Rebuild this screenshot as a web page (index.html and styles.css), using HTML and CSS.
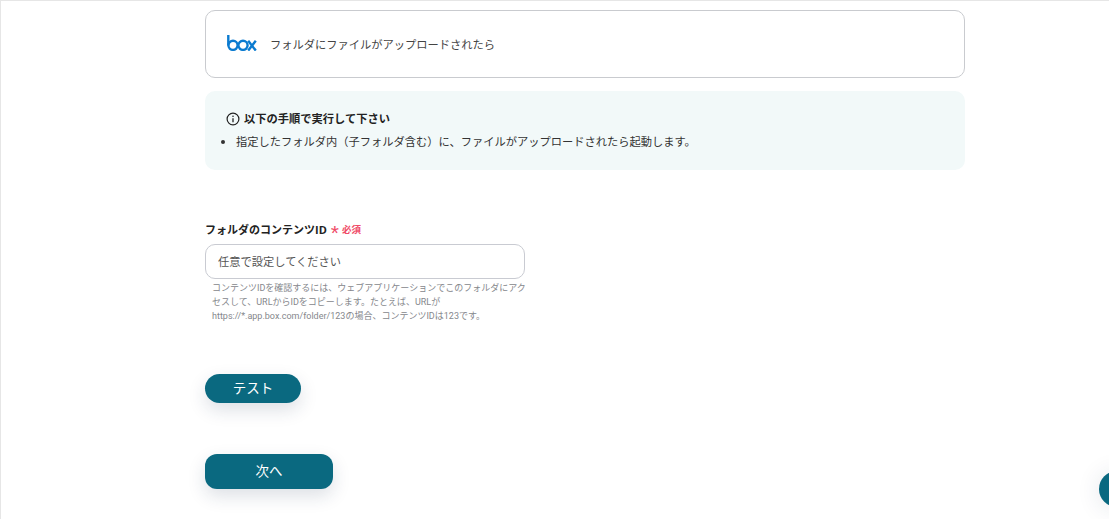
FILE: index.html
```html
<!DOCTYPE html>
<html lang="ja">
<head>
<meta charset="utf-8">
<title>フォルダにファイルがアップロードされたら</title>
<link rel="stylesheet" href="styles.css">
</head>
<body>
<main class="page">
  <section class="trigger-card">
    <svg class="box-logo" width="30" height="16" viewBox="0 0 30 16" aria-label="box">
      <g fill="none" stroke="#0b7bd0" stroke-width="2.4">
        <path d="M1.3 0v10.5"/>
        <circle cx="6" cy="10.3" r="4.6"/>
        <circle cx="16" cy="10.3" r="4.6"/>
        <path d="M21.2 5.8l7.6 9.8M28.8 5.8l-7.6 9.8"/>
      </g>
    </svg>
    <span class="trigger-title">フォルダにファイルがアップロードされたら</span>
  </section>

  <section class="notice">
    <div class="notice-head">
      <svg width="14" height="14" viewBox="0 0 14 14" aria-hidden="true">
        <circle cx="7" cy="7" r="5.9" fill="none" stroke="#222" stroke-width="1.2"/>
        <path d="M7 6.2v4" stroke="#222" stroke-width="1.3" fill="none"/>
        <circle cx="7" cy="4.2" r=".8" fill="#222"/>
      </svg>
      <strong>以下の手順で実行して下さい</strong>
    </div>
    <ul class="notice-list">
      <li>指定したフォルダ内（子フォルダ含む）に、ファイルがアップロードされたら起動します。</li>
    </ul>
  </section>

  <section class="field">
    <div class="field-label">
      <span class="label-text">フォルダのコンテンツID</span>
      <span class="star">*</span>
      <span class="required">必須</span>
    </div>
    <input class="text-input" type="text" placeholder="任意で設定してください">
    <p class="help">コンテンツIDを確認するには、ウェブアプリケーションでこのフォルダにアクセスして、URLからIDをコピーします。たとえば、URLがhttps://*.app.box.com/folder/123の場合、コンテンツIDは123です。</p>
  </section>

  <button class="btn btn-test" type="button">テスト</button>
  <button class="btn btn-next" type="button">次へ</button>
</main>
<div class="fab"></div>
</body>
</html>
```

FILE: styles.css
```css
* { box-sizing: border-box; }
html, body { height: 100%; }
body {
  margin: 0;
  overflow: hidden;
  background: #fff;
  color: #222;
  font-family: "Open Sans", "Noto Sans CJK JP", sans-serif;
  border-top: 1px solid #e6e6e6;
  border-left: 1px solid #e6e6e6;
}
.page {
  width: 760px;
  margin-left: 204px;
  padding-top: 9px;
  display: flex;
  flex-direction: column;
  align-items: flex-start;
}
.trigger-card {
  width: 100%;
  height: 68px;
  border: 1px solid #c9cbcf;
  border-radius: 10px;
  display: flex;
  align-items: center;
  padding: 0 0 0 21px;
  gap: 13px;
}
.box-logo { flex: none; margin-top: -2px; }
.trigger-title { font-size: 11.25px; color: #444; }
.notice {
  width: 100%;
  height: 79px;
  margin-top: 13px;
  padding: 19px 21px 0;
  background: #f2f9f9;
  border-radius: 10px;
}
.notice-head {
  display: flex;
  align-items: center;
  gap: 4px;
  height: 16px;
  font-size: 11.25px;
}
.notice-head svg { flex: none; margin-top: 2px; }
.notice-list {
  margin: 7px 0 0;
  padding: 0 0 0 10px;
  font-size: 11.25px;
  line-height: 18px;
  color: #333;
}
.field {
  width: 320px;
  margin-top: 50px;
}
.field-label {
  display: flex;
  align-items: center;
  height: 18px;
  font-size: 11px;
}
.label-text { font-weight: 700; color: #222; }
.star {
  color: #ef4b67;
  font-family: "Liberation Sans", sans-serif;
  font-size: 21px;
  line-height: 1;
  margin: 7px 0 0 4px;
}
.required { color: #ef4b67; font-size: 9.5px; font-weight: 700; margin-left: 3px; }
.text-input {
  display: block;
  width: 320px;
  height: 35px;
  margin-top: 6px;
  padding: 0 12px;
  border: 1px solid #c9cbd2;
  border-radius: 10px;
  background: #fff;
  font: 11.25px "Open Sans", "Noto Sans CJK JP", sans-serif;
  outline: none;
}
.text-input::placeholder { color: #555; opacity: 1; }
.help {
  margin: 2px -3px 0 7px;
  font-family: "Roboto", "Noto Sans CJK JP", sans-serif;
  font-size: 9px;
  line-height: 14px;
  color: #85878c;
}
.btn {
  display: block;
  border: 0;
  padding: 0 0 4px;
  background: #0a6980;
  color: #fff;
  font-family: "Open Sans", "Noto Sans CJK JP", sans-serif;
  font-size: 13.5px;
  box-shadow: 0 7px 18px rgba(30, 50, 80, .15);
}
.btn-test {
  width: 96px;
  height: 29px;
  margin-top: 51px;
  border-radius: 15px;
}
.btn-next {
  width: 128px;
  height: 35px;
  margin-top: 51px;
  border-radius: 12px;
}
.fab {
  position: fixed;
  left: 1099px;
  top: 471px;
  width: 36px;
  height: 36px;
  border-radius: 50%;
  background: #0a6980;
  box-shadow: 0 2px 24px rgba(30, 50, 80, .12);
}
```
